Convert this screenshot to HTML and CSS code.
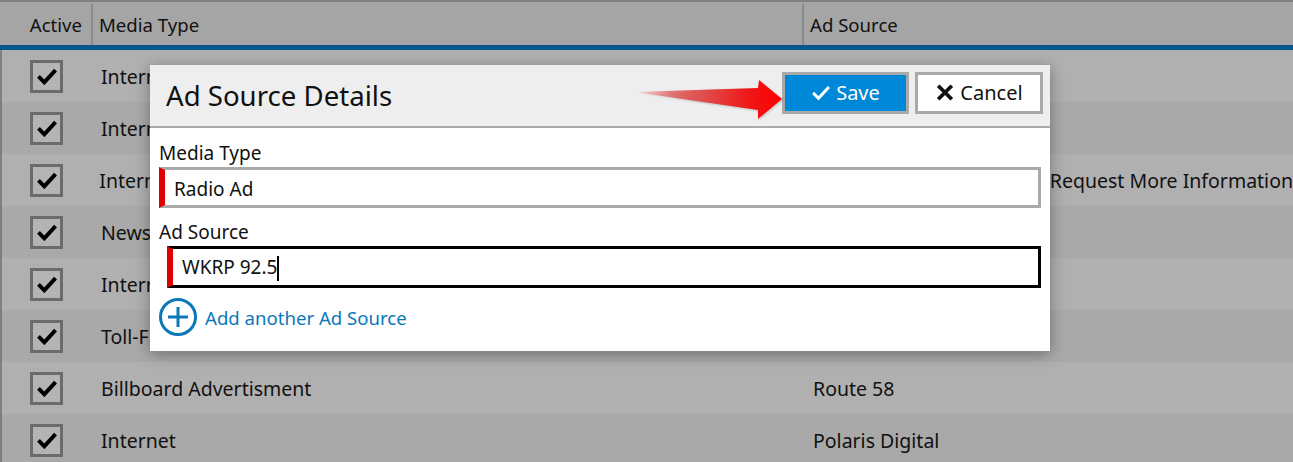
FILE: index.html
```html
<!DOCTYPE html>
<html lang="en">
<head>
    <meta charset="UTF-8">
    <meta name="viewport" content="width=device-width, initial-scale=1.0">
    <title>Ad Sources</title>
    <link rel="stylesheet" href="styles.css">
</head>
<body>
    <svg class="svg-defs" width="0" height="0">
        <symbol id="check" viewBox="0 0 24 20">
            <path d="M2.5 10.5 L9 17 L21.5 3.5" fill="none" stroke="currentColor"/>
        </symbol>
    </svg>

    <div class="grid">
        <div class="grid-head">
            <div class="col-active">Active</div>
            <div class="col-media">Media Type</div>
            <div class="col-source">Ad Source</div>
        </div>
        <div class="grid-row">
            <div class="col-active"><span class="checkbox"><svg><use href="#check"/></svg></span></div>
            <div class="col-media">Internet</div>
            <div class="col-source"></div>
        </div>
        <div class="grid-row">
            <div class="col-active"><span class="checkbox"><svg><use href="#check"/></svg></span></div>
            <div class="col-media">Internet</div>
            <div class="col-source"></div>
        </div>
        <div class="grid-row">
            <div class="col-active"><span class="checkbox"><svg><use href="#check"/></svg></span></div>
            <div class="col-media">Internet</div>
            <div class="col-source">Internet Leads Generation - Request More Information</div>
        </div>
        <div class="grid-row">
            <div class="col-active"><span class="checkbox"><svg><use href="#check"/></svg></span></div>
            <div class="col-media">Newspaper</div>
            <div class="col-source"></div>
        </div>
        <div class="grid-row">
            <div class="col-active"><span class="checkbox"><svg><use href="#check"/></svg></span></div>
            <div class="col-media">Internet</div>
            <div class="col-source"></div>
        </div>
        <div class="grid-row">
            <div class="col-active"><span class="checkbox"><svg><use href="#check"/></svg></span></div>
            <div class="col-media">Toll-Free</div>
            <div class="col-source"></div>
        </div>
        <div class="grid-row">
            <div class="col-active"><span class="checkbox"><svg><use href="#check"/></svg></span></div>
            <div class="col-media">Billboard Advertisment</div>
            <div class="col-source">Route 58</div>
        </div>
        <div class="grid-row">
            <div class="col-active"><span class="checkbox"><svg><use href="#check"/></svg></span></div>
            <div class="col-media">Internet</div>
            <div class="col-source">Polaris Digital</div>
        </div>
    </div>

    <div class="modal">
        <div class="modal-header">
            <h2>Ad Source Details</h2>
            <div class="modal-buttons">
                <button class="btn btn-save">
                    <svg class="btn-icon"><use href="#check"/></svg>Save
                </button>
                <button class="btn btn-cancel">
                    <svg class="btn-icon" viewBox="0 0 20 20"><path d="M2 2 L18 18 M18 2 L2 18" fill="none" stroke="currentColor" stroke-width="4.4"/></svg>Cancel
                </button>
            </div>
        </div>
        <div class="modal-body">
            <label class="field-label">Media Type</label>
            <div class="field">Radio Ad</div>
            <label class="field-label">Ad Source</label>
            <div class="field field-focus">WKRP 92.5<span class="caret"></span></div>
            <a class="add-link" href="#">
                <svg class="add-icon" viewBox="0 0 38 38">
                    <circle cx="19" cy="19" r="17.5" fill="none" stroke="currentColor" stroke-width="3"/>
                    <path d="M19 9 V29 M9 19 H29" fill="none" stroke="currentColor" stroke-width="3"/>
                </svg>
                Add another Ad Source
            </a>
        </div>
    </div>

    <!-- callout arrow pasted on top of the screenshot -->
    <svg class="arrow" viewBox="0 0 160 50">
        <defs>
            <linearGradient id="arrow-fill" x1="0" y1="0" x2="1" y2="0">
                <stop offset="0" stop-color="#f00000" stop-opacity="0"/>
                <stop offset="0.45" stop-color="#e05050"/>
                <stop offset="0.8" stop-color="#f01414"/>
                <stop offset="1" stop-color="#ff0000"/>
            </linearGradient>
        </defs>
        <path d="M4 17 L128 13 L129 5 L152 24 L128 44 L128 35 Z" fill="url(#arrow-fill)"/>
    </svg>
</body>
</html>
```

FILE: styles.css
```css
* {
    box-sizing: border-box;
}

html, body {
    height: 100%;
}

body {
    font-family: "Noto Sans", "Open Sans", Arial, sans-serif;
    font-size: 19px;
    margin: 0;
    overflow: hidden;
    background: #adadad;
    color: #111;
}

.svg-defs {
    position: absolute;
}

.grid {
    border-left: 2px solid #808080;
}

.grid-head {
    display: flex;
    height: 50px;
    padding-top: 2px;
    background: #a5a5a5;
    border-top: 2px solid #808080;
    border-bottom: 5px solid #05568a;
    margin-left: -2px;
}

.grid-head > div {
    display: flex;
    align-items: center;
    border-right: 2px solid #8a8a8a;
    padding-left: 6px;
    padding-bottom: 1px;
    font-size: 18.6px;
}

.grid-head .col-active {
    width: 93px;
    justify-content: flex-end;
    padding-right: 9px;
}

.grid-head .col-media {
    width: 711px;
}

.grid-head .col-source {
    border-right: none;
}

.grid-row {
    display: flex;
    align-items: center;
    height: 52px;
    white-space: nowrap;
    font-size: 19.5px;
}

.grid-row:nth-child(even) {
    background: #b0b0b0;
}

.grid-row:nth-child(odd) {
    background: #a9a9a9;
}

.grid-row .col-active {
    width: 91px;
    padding-left: 28px;
    display: flex;
}

.grid-row .col-media {
    width: 712px;
    padding-left: 8px;
}

.grid-row .col-source {
    padding-left: 8px;
}

.checkbox {
    display: flex;
    align-items: center;
    justify-content: center;
    width: 33px;
    height: 33px;
    border: 3px solid #6b6b6b;
    background: #b4b4b4;
    color: #000;
}

.checkbox svg {
    width: 22px;
    height: 18px;
    stroke-width: 4.4;
}

.modal {
    position: absolute;
    left: 150px;
    top: 65px;
    width: 900px;
    height: 286px;
    background: #fff;
    box-shadow: 0 3px 14px rgba(0, 0, 0, 0.35);
}

.modal-header {
    display: flex;
    align-items: center;
    justify-content: space-between;
    height: 63px;
    padding: 0 7px 6px 16px;
    background: #eeeeee;
    border-bottom: 2px solid #aaaaaa;
}

.modal-header h2 {
    margin: 5px 0 0;
    font-size: 27.6px;
    font-weight: 400;
}

.modal-buttons {
    display: flex;
    gap: 6px;
}

.btn {
    display: flex;
    align-items: center;
    justify-content: center;
    gap: 5px;
    height: 42px;
    border: 3px solid #a9a9a9;
    font-family: inherit;
    font-size: 20px;
    padding: 0;
}

.btn-save {
    width: 127px;
    background: #0088d8;
    color: #fff;
    stroke-width: 3.6;
}

.btn-cancel {
    width: 128px;
    background: #fff;
    color: #111;
}

.btn-icon {
    width: 20px;
    height: 17px;
}

.modal-body {
    display: flex;
    flex-direction: column;
    align-items: flex-start;
    padding: 11px 9px 0;
}

.field-label {
    height: 28px;
    line-height: 28px;
}

.field {
    width: 882px;
    height: 41px;
    line-height: 38px;
    padding-left: 9px;
    margin-bottom: 10px;
    border: 3px solid #aaaaaa;
    border-left: 6px solid #e00000;
}

.field-focus {
    width: 874px;
    height: 42px;
    line-height: 36px;
    margin-left: 8px;
    margin-bottom: 10px;
    border-color: #000;
    border-left-color: #e00000;
}

.caret {
    display: inline-block;
    width: 2px;
    height: 25px;
    background: #000;
    vertical-align: middle;
}

.add-link {
    display: flex;
    align-items: center;
    gap: 8px;
    font-size: 18.6px;
    color: #0b78b8;
    text-decoration: none;
}

.add-icon {
    width: 38px;
    height: 38px;
}

.arrow {
    position: absolute;
    left: 630px;
    top: 75px;
    width: 160px;
    height: 50px;
    filter: drop-shadow(1px 1px 1px rgba(0, 0, 0, 0.2));
}
```
